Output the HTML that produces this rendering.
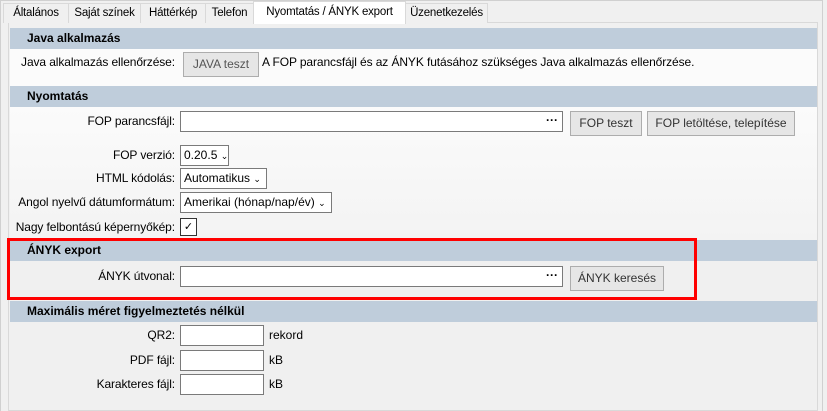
<!DOCTYPE html>
<html><head><meta charset="utf-8"><style>
*{box-sizing:border-box;margin:0;padding:0}
body{width:827px;height:411px;background:#f0f0f0;font-family:"Liberation Sans",sans-serif;font-size:12px;color:#000;position:relative;overflow:hidden}
.a{position:absolute}
.tab{position:absolute;top:3px;height:20px;border:1px solid #d9d9d9;border-bottom:none;background:#f0f0f0;padding:3px 0 0 0;text-align:center;font-size:11.5px;letter-spacing:-0.2px;white-space:nowrap}
.hdr{position:absolute;left:10px;width:807px;background:#bfcddb;font-weight:bold;padding-left:17px;line-height:21px;height:21px}
.lbl{position:absolute;text-align:right;width:172px;left:3px;line-height:21px;white-space:nowrap;letter-spacing:-0.1px}
.inp{position:absolute;background:#fff;border:1px solid #7a7a7a;height:21px}
.btn{position:absolute;background:#e6e6e6;border:1px solid #adadad;text-align:center;line-height:22px;color:#333}
.sel{position:absolute;background:#fff;border:1px solid #7a7a7a;height:21px;line-height:19px;padding-left:3px;white-space:nowrap}
.dots{position:absolute;right:4px;top:0;font-weight:bold;line-height:16px}
</style></head><body>
<div class="a" style="left:0;top:0;width:823px;height:411px;border-left:1px solid #d0d0d0;border-right:1px solid #d0d0d0;border-top:1px solid #d0d0d0"></div>
<div class="a" style="left:8px;top:22px;width:810px;height:389px;background:#f0f0f0;border:1px solid #d9d9d9"></div>
<div class="tab" style="left:3px;width:66px">Általános</div>
<div class="tab" style="left:68px;width:73px">Saját színek</div>
<div class="tab" style="left:140px;width:66px">Háttérkép</div>
<div class="tab" style="left:205px;width:49px">Telefon</div>
<div class="tab" style="left:253px;top:1px;height:23px;width:153px;background:#fff;padding-top:4px">Nyomtatás / ÁNYK export</div>
<div class="tab" style="left:405px;width:83px">Üzenetkezelés</div>

<div class="a" style="left:10px;top:49px;width:807px;height:37px;background:#fbfbfb"></div>
<div class="a" style="left:10px;top:107px;width:807px;height:133px;background:linear-gradient(#fbfbfb,#f3f3f3)"></div>

<div class="hdr" style="top:28px">Java alkalmazás</div>
<div class="lbl" style="top:52px">Java alkalmazás ellenőrzése:</div>
<div class="btn" style="left:183px;top:52px;width:76px;height:25px;color:#555">JAVA teszt</div>
<div class="a" style="left:262px;top:52px;line-height:21px;letter-spacing:-0.1px">A FOP parancsfájl és az ÁNYK futásához szükséges Java alkalmazás ellenőrzése.</div>

<div class="hdr" style="top:86px">Nyomtatás</div>
<div class="lbl" style="top:111px">FOP parancsfájl:</div>
<div class="inp" style="left:180px;top:111px;width:383px"><span class="dots">···</span></div>
<div class="btn" style="left:570px;top:111px;width:72px;height:25px">FOP teszt</div>
<div class="btn" style="left:647px;top:111px;width:148px;height:25px">FOP letöltése, telepítése</div>

<div class="lbl" style="top:145px">FOP verzió:</div>
<div class="sel" style="left:180px;top:145px;width:49px">0.20.5 <span style="font-size:9px">&#8964;</span></div>
<div class="lbl" style="top:168px">HTML kódolás:</div>
<div class="sel" style="left:180px;top:168px;width:87px">Automatikus <span style="font-size:9px">&#8964;</span></div>
<div class="lbl" style="top:192px">Angol nyelvű dátumformátum:</div>
<div class="sel" style="left:180px;top:192px;width:152px">Amerikai (hónap/nap/év) <span style="font-size:9px">&#8964;</span></div>
<div class="lbl" style="top:217px">Nagy felbontású képernyőkép:</div>
<div class="a" style="left:180px;top:218px;width:17px;height:18px;border:1px solid #333;background:#fff;text-align:center;line-height:16px;font-size:11px">✓</div>

<div class="hdr" style="top:240px">ÁNYK export</div>
<div class="lbl" style="top:266px">ÁNYK útvonal:</div>
<div class="inp" style="left:180px;top:266px;width:383px"><span class="dots">···</span></div>
<div class="btn" style="left:570px;top:266px;width:94px;height:25px">ÁNYK keresés</div>
<div class="a" style="left:7px;top:238px;width:690px;height:62px;border:3px solid #f00"></div>

<div class="hdr" style="top:301px">Maximális méret figyelmeztetés nélkül</div>
<div class="lbl" style="top:325px">QR2:</div>
<div class="inp" style="left:180px;top:325px;width:84px"></div>
<div class="a" style="left:269px;top:325px;line-height:21px">rekord</div>
<div class="lbl" style="top:350px">PDF fájl:</div>
<div class="inp" style="left:180px;top:350px;width:84px"></div>
<div class="a" style="left:269px;top:350px;line-height:21px">kB</div>
<div class="lbl" style="top:374px">Karakteres fájl:</div>
<div class="inp" style="left:180px;top:374px;width:84px"></div>
<div class="a" style="left:269px;top:374px;line-height:21px">kB</div>
</body></html>
